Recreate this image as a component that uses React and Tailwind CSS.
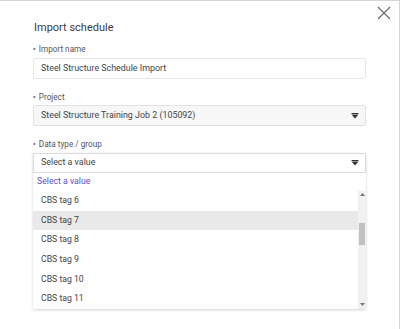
import React from "react";

function Caret() {
  return (
    <svg width="8" height="6" viewBox="0 0 8 6" className="shrink-0">
      <rect x="0.5" y="0" width="7" height="1" fill="#333" />
      <path d="M0.5 1.5 H7.5 L4 5.5 Z" fill="#333" />
    </svg>
  );
}

export default function App() {
  const items = ["CBS tag 6", "CBS tag 7", "CBS tag 8", "CBS tag 9", "CBS tag 10", "CBS tag 11"];
  return (
    <div
      className="w-[400px] h-[329px] bg-white border-t border-r border-[#d6d6d6] relative overflow-hidden"
      style={{ fontFamily: "Roboto, 'Liberation Sans', sans-serif" }}
    >
      <button className="absolute right-[7px] top-[4px] w-[16px] h-[16px] flex items-center justify-center">
        <svg width="14" height="14" viewBox="0 0 14 14">
          <path d="M1 1 L13 13 M13 1 L1 13" stroke="#666" strokeWidth="1.1" fill="none" />
        </svg>
      </button>
      <div className="pl-[33px] pr-[33px] pt-[18px] flex flex-col">
        <div className="text-[11px] leading-[18px] text-[#3c3c3c] pl-[1px]">Import schedule</div>

        <div className="mt-[6px] text-[8.2px] leading-[12px] text-[#555]">
          <span className="mr-[3px]">•</span>Import name
        </div>
        <div className="mt-[3px] h-[21px] border border-[#e6e6e6] rounded-[2px] flex items-center pl-[7px] text-[8.9px] text-[#444]">
          Steel Structure Schedule Import
        </div>

        <div className="mt-[12px] text-[8.2px] leading-[12px] text-[#555]">
          <span className="mr-[3px]">•</span>Project
        </div>
        <div className="mt-[2px] h-[21px] border border-[#e2e2e2] bg-[#f7f7f7] rounded-[2px] flex items-center justify-between pl-[7px] pr-[6px] text-[8.9px] text-[#444]">
          <span>Steel Structure Training Job 2 (105092)</span>
          <Caret />
        </div>

        <div className="mt-[12px] text-[8.2px] leading-[12px] text-[#555]">
          <span className="mr-[3px]">•</span>Data type / group
        </div>
        <div className="mt-[3px] shadow-[0_1px_3px_rgba(0,0,0,0.18)] rounded-[2px]">
          <div className="h-[20px] border border-[#dcdcdc] bg-white flex items-center justify-between pl-[7px] pr-[6px] text-[8.9px] text-[#444]">
            <span>Select a value</span>
            <Caret />
          </div>
          <div className="bg-white">
            <div className="h-[18px] flex items-center pl-[4px] text-[8.7px] text-[#5a4fc4]">Select a value</div>
            <div className="flex h-[118px]">
              <div className="flex-1 flex flex-col">
                {items.map((t, i) => (
                  <div
                    key={t}
                    className={
                      "h-[19.6px] flex items-center pl-[8px] text-[8.7px] text-[#444] " +
                      (i === 1 ? "bg-[#e9e9e9]" : "")
                    }
                  >
                    {t}
                  </div>
                ))}
              </div>
              <div className="w-[8px] bg-[#f1f1f1] flex flex-col items-center">
                <svg width="5" height="4" viewBox="0 0 5 4" className="mt-[2px]">
                  <path d="M0 3 H5 L2.5 0 Z" fill="#777" />
                </svg>
                <div className="mt-[26px] w-[6px] h-[22px] bg-[#c1c1c1]" />
                <div className="flex-1" />
                <svg width="5" height="4" viewBox="0 0 5 4" className="mb-[3px]">
                  <path d="M0 1 H5 L2.5 4 Z" fill="#777" />
                </svg>
              </div>
            </div>
          </div>
        </div>
      </div>
    </div>
  );
}
